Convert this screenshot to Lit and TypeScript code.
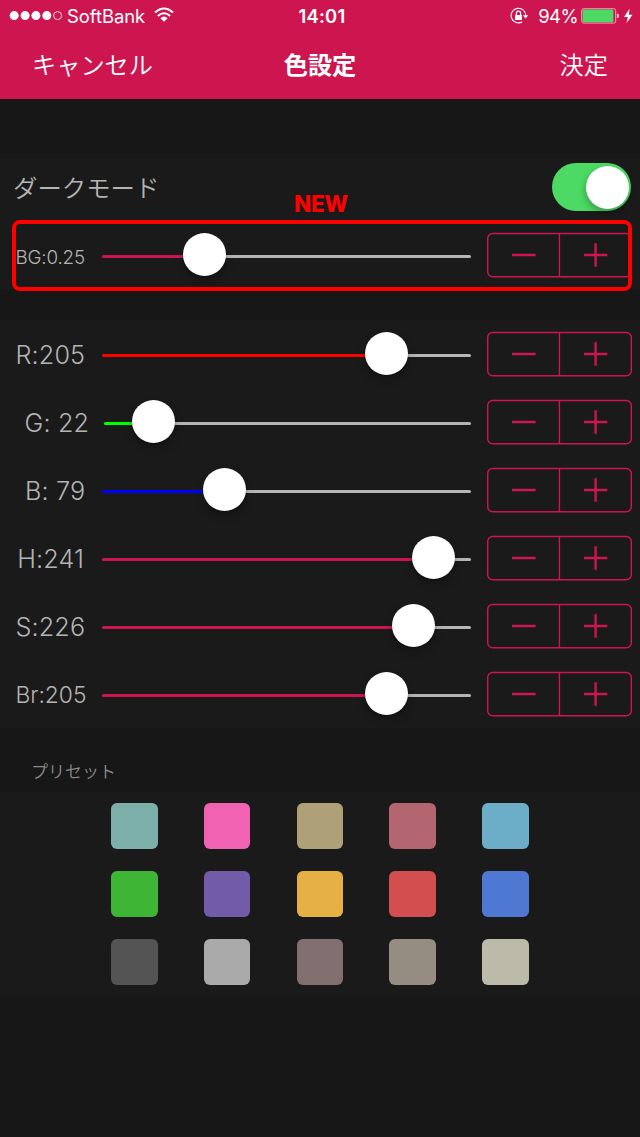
import { LitElement, html, css, svg } from "lit";
import { customElement, property } from "lit/decorators.js";

interface Channel {
  label: string;
  kind: string;
  color: string;
  start: number;
  thumb: number;
}

const BG: Channel = { label: "BG:0.25", kind: "tiny", color: "#cd164f", start: 102, thumb: 204.4 };

const CHANNELS: Channel[] = [
  { label: "R:205", kind: "r", color: "#ff0000", start: 102, thumb: 386.8 },
  { label: "G: 22", kind: "g", color: "#00ff00", start: 104, thumb: 153.4 },
  { label: "B: 79", kind: "b", color: "#0000ff", start: 102, thumb: 224.5 },
  { label: "H:241", kind: "h", color: "#cd164f", start: 102, thumb: 433.2 },
  { label: "S:226", kind: "s", color: "#cd164f", start: 102, thumb: 413 },
  { label: "Br:205", kind: "small", color: "#cd164f", start: 102, thumb: 386.8 },
];

const PRESETS = [
  "#7dafaa", "#f162b3", "#aea178", "#b46670", "#6cadc7",
  "#3eb534", "#725ba8", "#e6b044", "#d24e4f", "#4f78d2",
  "#545454", "#aaaaaa", "#826f6f", "#958c82", "#bcbaa8",
];

const TRACK_END = 471;

@customElement("value-slider")
class ValueSlider extends LitElement {
  @property() color = "#cd164f";
  @property({ type: Number }) start = 102;
  @property({ type: Number }) thumb = 200;

  static styles = css`
    :host { display: block; height: 68px; }
    .track { display: grid; align-items: center; height: 68px; }
    .rail, .fill, .knob { grid-area: 1 / 1; }
    .rail, .fill { height: 3px; border-radius: 1.5px; margin-top: 3px; }
    .rail { background: #b5b5b5; margin-left: 4px; }
    .knob {
      width: 43px; height: 43px; border-radius: 50%; background: #fff; margin-top: -2px;
      box-shadow: 0 5px 9px rgba(0, 0, 0, 0.25), 0 1px 2px rgba(0, 0, 0, 0.2);
    }
  `;

  render() {
    const x = this.thumb - this.start;
    return html`<div class="track">
      <div class="rail"></div>
      <div class="fill" style="width:${x}px;background:${this.color}"></div>
      <div class="knob" style="margin-left:${x - 21.5}px"></div>
    </div>`;
  }
}

@customElement("value-stepper")
class ValueStepper extends LitElement {
  static styles = css`
    :host { display: block; width: 146px; height: 46px; }
    svg { display: block; }
  `;

  render() {
    return html`<svg width="146" height="46" fill="none" stroke="#cd164f">
      <rect x="1.7" y="1.5" width="143.6" height="43.3" rx="5" stroke-width="1.4" />
      <path d="M73.4 1.6V45" stroke-width="1.4" />
      <path d="M26 23H49.7M98 23H121.3M109.6 11.3V34.8" stroke-width="2.4" />
    </svg>`;
  }
}

@customElement("status-bar")
class StatusBar extends LitElement {
  static styles = css`
    :host {
      display: grid; grid-template-columns: 1fr auto 1fr; height: 32px; align-items: center;
      color: #fff; font: 400 18.4px/32px Inter, "Liberation Sans", sans-serif;
    }
    svg { display: block; flex: none; }
    .left { display: flex; align-items: center; padding-left: 9px; }
    .carrier { margin-left: 4px; letter-spacing: -0.02px; }
    .wifi { margin-left: 9px; margin-top: -2px; }
    .time { font-weight: 600; letter-spacing: 0.2px; padding-left: 4px; }
    .right { display: flex; align-items: center; justify-content: flex-end; padding-right: 7px; }
    .percent { margin: 0 3px 0 9px; letter-spacing: -0.5px; }
    .bolt { margin-left: 4px; }
  `;

  render() {
    return html`
      <div class="left">
        <svg width="54" height="12" fill="#fff">
          ${[5.2, 16.1, 26.9, 37.8].map((x) => svg`<circle cx=${x} cy="5.6" r="4.5" />`)}
          <circle cx="48.6" cy="5.6" r="4" fill="none" stroke="#fff" stroke-width="0.8" />
        </svg>
        <span class="carrier">SoftBank</span>
        <svg class="wifi" width="20" height="16" viewBox="0 0 20 16">
          <path d="M1 5.6Q10-2.6 19 5.6M3.9 9Q10 3.4 16.1 9" fill="none" stroke="#fff" stroke-width="2" />
          <path d="M6.4 11.2Q10 8 13.6 11.2L10 14.8Z" fill="#fff" />
        </svg>
      </div>
      <span class="time">14:01</span>
      <div class="right">
        <svg width="19" height="18" viewBox="0 0 19 18">
          <path d="M15.7 9A7.3 7.3 0 1 0 12.2 14.8" fill="none" stroke="#fff" stroke-width="1.1" />
          <path d="M12.8 8.2H18.3L15.5 11.4Z" fill="#fff" />
          <rect x="5.1" y="7.9" width="6.8" height="5" rx=".5" fill="#fff" />
          <path d="M6.4 8V6.2a2.1 2.1 0 0 1 4.2 0V8" fill="none" stroke="#fff" stroke-width="1.2" />
        </svg>
        <span class="percent">94%</span>
        <svg width="39" height="16" viewBox="0 0 39 16">
          <rect x=".7" y=".7" width="34" height="14.4" rx="2" fill="none" stroke="#f0a0b8" stroke-width="1" />
          <rect x="1.6" y="1.6" width="30.8" height="12.6" rx="1" fill="#4cd964" />
          <path d="M36 5.5Q37.8 6 37.8 7.9T36 10.3Z" fill="#fff" />
        </svg>
        <svg class="bolt" width="9" height="16" viewBox="0 0 9 16">
          <path d="M5.6.7 0 8.9H3.8L2.5 15.2 8.5 6.7H4.8Z" fill="#fff" />
        </svg>
      </div>`;
  }
}

@customElement("app-root")
class AppRoot extends LitElement {
  static styles = css`
    :host {
      display: block; height: 1137px; overflow: hidden; background: #171717; color: #b4b4b4;
      font-family: Inter, "Liberation Sans", "Noto Sans CJK JP", sans-serif;
    }
    * { box-sizing: border-box; }
    .header { height: 99px; background: #cd164f; }
    .nav {
      display: grid; grid-template-columns: 1fr auto 1fr; align-items: center; height: 64px;
      padding: 0 32px; color: #fff; font: 350 24.2px/64px "Noto Sans CJK JP", sans-serif;
    }
    .title { font-weight: 700; }
    .confirm { text-align: right; }
    .group { background: #1a1a1a; position: relative; }
    .first { margin-top: 54px; height: 136px; }
    .channels { margin-top: 31px; height: 408px; }
    .mode {
      height: 68px; display: flex; align-items: center; justify-content: space-between;
      padding: 0 9px 0 13px; font: 350 24.4px/66px "Noto Sans CJK JP", sans-serif;
    }
    .switch {
      width: 79px; height: 48px; border-radius: 24px; background: #4cd964; padding: 2.5px;
      display: flex; justify-content: flex-end;
    }
    .knob { width: 43px; height: 43px; border-radius: 50%; background: #fff; box-shadow: -1px 4px 7px rgba(0, 0, 0, 0.25); }
    .row { height: 68px; display: flex; align-items: center; }
    .label {
      flex: none; white-space: pre; font-size: 25.2px; font-weight: 350; line-height: 68px;
      letter-spacing: 0.15px; padding-top: 1px;
    }
    .r, .s, .small, .tiny { padding-left: 15.4px; }
    .g { padding-left: 24.6px; }
    .b { padding-left: 25px; }
    .h { padding-left: 17.2px; }
    .small { font-size: 22.8px; letter-spacing: 0; }
    .tiny { font-size: 18.8px; letter-spacing: -0.15px; padding-top: 6px; }
    .slider { flex: none; }
    .stepper { margin-left: 15px; flex: none; }
    .badge {
      position: absolute; left: 294px; top: 37px; color: #ff0000;
      font: 800 22.5px/28px Inter, sans-serif; letter-spacing: -0.3px;
    }
    .highlight {
      position: absolute; left: 12px; top: 67px; width: 620px; height: 71px;
      border: 4px solid #ff0000; border-radius: 8px;
    }
    .section { height: 63px; padding: 25px 0 0 31px; color: #8a8a8a; font: 350 17px/36px "Noto Sans CJK JP", sans-serif; }
    .presets {
      margin-top: 1px; background: #1a1a1a; height: 204px; padding: 11px 0 0 111px;
      display: grid; grid-template-columns: repeat(5, 92.75px); grid-auto-rows: 68px;
    }
    .swatch { width: 46.7px; height: 46.3px; border-radius: 6px; }
  `;

  row(c: Channel) {
    return html`<div class="row">
      <div class="label ${c.kind}" style="width:${c.start}px">${c.label}</div>
      <value-slider class="slider" style="width:${TRACK_END - c.start}px"
        color=${c.color} start=${c.start} thumb=${c.thumb}></value-slider>
      <value-stepper class="stepper"></value-stepper>
    </div>`;
  }

  render() {
    return html`
      <div class="header">
        <status-bar></status-bar>
        <div class="nav">
          <span>キャンセル</span><span class="title">色設定</span><span class="confirm">決定</span>
        </div>
      </div>
      <div class="group first">
        <div class="mode"><span>ダークモード</span><div class="switch"><div class="knob"></div></div></div>
        ${this.row(BG)}
        <div class="badge">NEW</div>
        <div class="highlight"></div>
      </div>
      <div class="group channels">${CHANNELS.map((c) => this.row(c))}</div>
      <div class="section">プリセット</div>
      <div class="presets">
        ${PRESETS.map((p) => html`<div class="swatch" style="background:${p}"></div>`)}
      </div>`;
  }
}
